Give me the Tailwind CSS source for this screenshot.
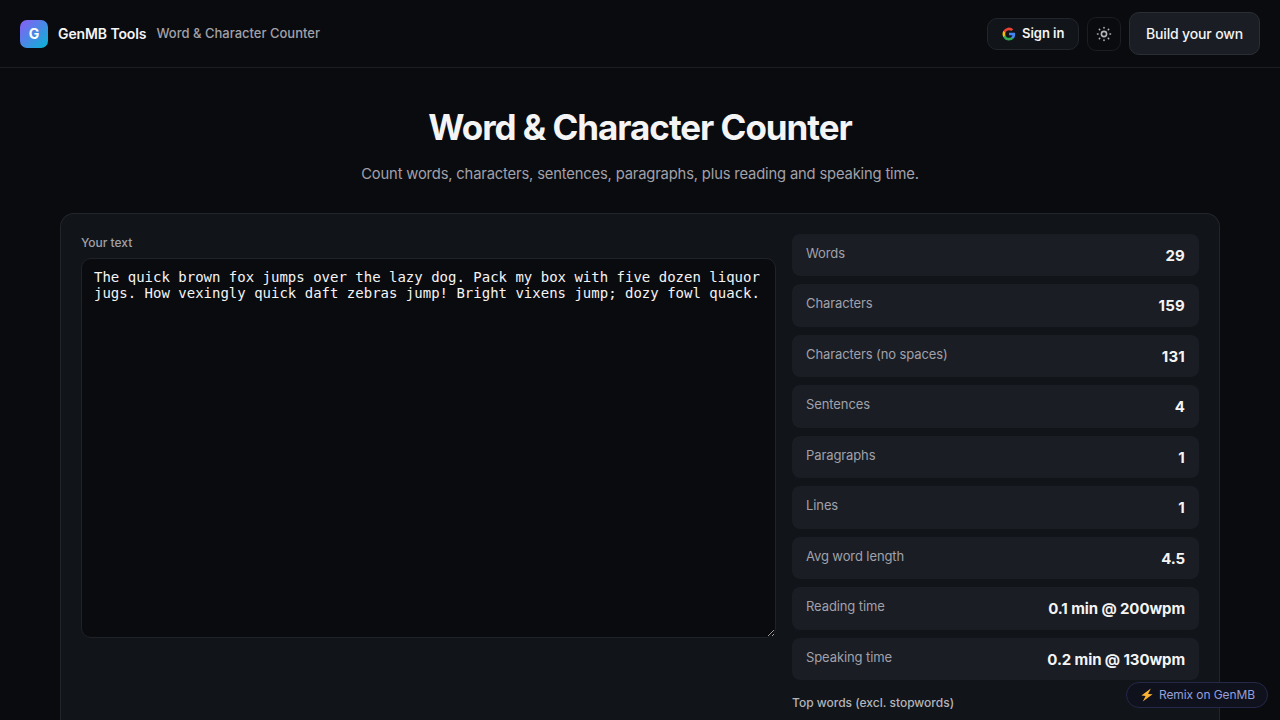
<!DOCTYPE html>
<html lang="en">
<head>
    <meta charset="UTF-8" />
    <meta name="viewport" content="width=device-width, initial-scale=1.0" />
    <title>Word & Character Counter</title>
    <script src="https://cdn.jsdelivr.net/npm/@tailwindcss/browser@4"></script>
</head>
<body class="h-screen overflow-hidden bg-[#0a0b0f] font-['Inter',sans-serif] text-[15px] leading-[1.5] text-[#f4f4f5]">
    <header class="flex h-[68px] items-center justify-between border-b border-[#1b1d22] px-5">
        <div class="flex items-center gap-2.5">
            <div class="flex size-7 items-center justify-center rounded-[7px] bg-linear-135/srgb from-[#8b5cf6] to-[#06b6d4] text-sm font-bold text-white">G</div>
            <span class="text-sm font-semibold tracking-[-0.1px]">GenMB Tools</span>
            <span class="text-[13px] font-medium text-[#a1a1aa]">Word &amp; Character Counter</span>
        </div>
        <div class="flex items-center gap-2">
            <button class="flex h-8 w-[92px] items-center gap-1.5 rounded-[10px] border border-[#22252b] bg-[#111419] pl-3.5 pt-px text-[13px] font-semibold tracking-[-0.03px]">
                <svg class="size-3.5 shrink-0" viewBox="0 0 24 24">
                    <path fill="#4285F4" d="M22.56 12.25c0-.78-.07-1.53-.2-2.25H12v4.26h5.92a5.06 5.06 0 0 1-2.2 3.32v2.77h3.57c2.08-1.92 3.27-4.74 3.27-8.1z" />
                    <path fill="#34A853" d="M12 23c2.97 0 5.46-.98 7.28-2.66l-3.57-2.77c-.98.66-2.23 1.06-3.71 1.06-2.86 0-5.29-1.93-6.16-4.53H2.18v2.84A11 11 0 0 0 12 23z" />
                    <path fill="#FBBC05" d="M5.84 14.1a6.6 6.6 0 0 1 0-4.2V7.06H2.18a11 11 0 0 0 0 9.88z" />
                    <path fill="#EA4335" d="M12 5.38c1.62 0 3.06.56 4.21 1.64l3.15-3.15A11 11 0 0 0 2.18 7.06L5.84 9.9C6.71 7.3 9.14 5.38 12 5.38z" />
                </svg>
                Sign in
            </button>
            <button class="flex size-[34px] items-center justify-center rounded-[9px] border border-[#1b1d22] text-[#b4b4bb]">
                <svg class="size-4" viewBox="0 0 16 16" fill="none" stroke="currentColor" stroke-width="1.6" stroke-linecap="round">
                    <circle cx="8" cy="8" r="2.6" />
                    <path d="M8 1.5v.5M8 14v.5M1.5 8h.5M14 8h.5M3.4 3.4l.3.3M12.3 12.3l.3.3M12.6 3.4l-.3.3M3.7 12.3l-.3.3" />
                </svg>
            </button>
            <button class="h-[43px] w-[131px] rounded-[10px] border border-[#2b2e35] bg-[#1a1d24] text-sm font-medium tracking-[-0.14px]">Build your own</button>
        </div>
    </header>

    <main class="mx-auto w-[1160px]">
        <h1 class="mt-[38px] text-center text-[35px] leading-[43px] font-bold tracking-[-1.05px]">Word &amp; Character Counter</h1>
        <p class="mt-[13px] text-center text-[14.75px] leading-6 tracking-[-0.16px] text-[#a1a1aa]">Count words, characters, sentences, paragraphs, plus reading and speaking time.</p>

        <section class="mt-[26.7px] grid h-[508px] grid-cols-[695px_407px] gap-4 rounded-t-[14px] border border-b-0 border-[#22252b] bg-[#111419] p-5">
            <div>
                <label for="input" class="block h-6 text-xs leading-[18px] font-medium text-[#a1a1aa]">Your text</label>
                <textarea id="input" spellcheck="false" class="block h-[380px] w-full resize-y rounded-[10px] border border-[#1f2228] bg-[#0a0b0f] px-3 py-2.5 font-['DejaVu_Sans_Mono',monospace] text-sm leading-4 text-[#f4f4f5]">The quick brown fox jumps over the lazy dog. Pack my box with five dozen liquor jugs. How vexingly quick daft zebras jump! Bright vixens jump; dozy fowl quack.</textarea>
            </div>
            <div>
                <div class="grid gap-2 tracking-[-0.1px]">
                    <div class="flex h-[42.5px] justify-between rounded-lg bg-[#1a1d24] px-3.5 py-2.5">
                        <span class="text-[13px] text-[#a1a1aa]">Words</span>
                        <span class="pt-px font-bold tracking-[0.2px]">29</span>
                    </div>
                    <div class="flex h-[42.5px] justify-between rounded-lg bg-[#1a1d24] px-3.5 py-2.5">
                        <span class="text-[13px] text-[#a1a1aa]">Characters</span>
                        <span class="pt-px font-bold tracking-[0.2px]">159</span>
                    </div>
                    <div class="flex h-[42.5px] justify-between rounded-lg bg-[#1a1d24] px-3.5 py-2.5">
                        <span class="text-[13px] text-[#a1a1aa]">Characters (no spaces)</span>
                        <span class="pt-px font-bold tracking-[0.2px]">131</span>
                    </div>
                    <div class="flex h-[42.5px] justify-between rounded-lg bg-[#1a1d24] px-3.5 py-2.5">
                        <span class="text-[13px] text-[#a1a1aa]">Sentences</span>
                        <span class="pt-px font-bold tracking-[0.2px]">4</span>
                    </div>
                    <div class="flex h-[42.5px] justify-between rounded-lg bg-[#1a1d24] px-3.5 py-2.5">
                        <span class="text-[13px] text-[#a1a1aa]">Paragraphs</span>
                        <span class="pt-px font-bold tracking-[0.2px]">1</span>
                    </div>
                    <div class="flex h-[42.5px] justify-between rounded-lg bg-[#1a1d24] px-3.5 py-2.5">
                        <span class="text-[13px] text-[#a1a1aa]">Lines</span>
                        <span class="pt-px font-bold tracking-[0.2px]">1</span>
                    </div>
                    <div class="flex h-[42.5px] justify-between rounded-lg bg-[#1a1d24] px-3.5 py-2.5">
                        <span class="text-[13px] text-[#a1a1aa]">Avg word length</span>
                        <span class="pt-px font-bold">4.5</span>
                    </div>
                    <div class="flex h-[42.5px] justify-between rounded-lg bg-[#1a1d24] px-3.5 py-2.5">
                        <span class="text-[13px] text-[#a1a1aa]">Reading time</span>
                        <span class="pt-px font-bold">0.1 min @ 200wpm</span>
                    </div>
                    <div class="flex h-[42.5px] justify-between rounded-lg bg-[#1a1d24] px-3.5 py-2.5">
                        <span class="text-[13px] text-[#a1a1aa]">Speaking time</span>
                        <span class="pt-px font-bold">0.2 min @ 130wpm</span>
                    </div>
                </div>
                <div class="mt-3.5 text-xs leading-[18px] font-medium text-[#b4b4bb]">Top words (excl. stopwords)</div>
            </div>
        </section>
    </main>

    <a href="#" class="fixed right-3 bottom-3 flex h-[26px] w-[142px] items-center gap-1 rounded-full border border-[#26284a] bg-[#0f111c] pl-3 text-xs tracking-[-0.1px] text-[#949fdc]">
        <svg class="h-4 w-4 shrink-0" viewBox="0 0 16 16">
            <path fill="#f9b233" d="M11.8 1.6 2.4 8.6l4.2.5-2.8 5.3L13.6 7.3l-4.5-.4z" />
        </svg>
        Remix on GenMB
    </a>
</body>
</html>
